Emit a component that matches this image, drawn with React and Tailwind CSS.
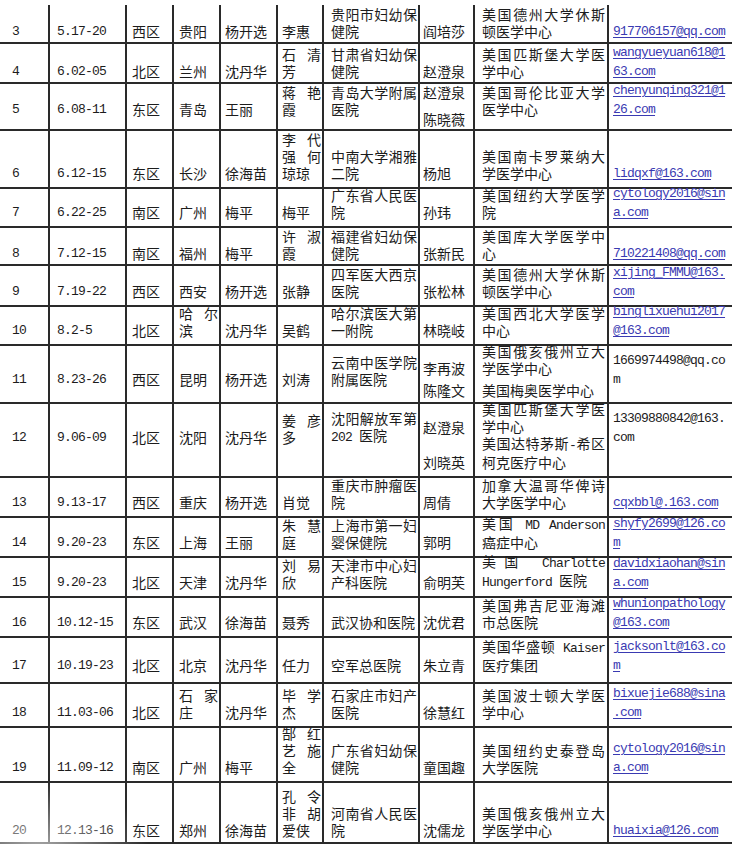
import React from 'react';

// column widths include the 2px right rule; padding follows the scan
const cols = [
  'w-[50px] pl-[12px] border-r-2',
  'w-[77px] pl-[7px] border-r-2',
  'w-[47px] pl-[5px] pr-[2px] border-r-2',
  'w-[47px] pl-[5px] pr-[1px] border-r-2',
  'w-[57px] pl-[4px] border-r-2',
  'w-[46px] pl-[4px] pr-[1px] border-r-2',
  'w-[96px] pl-[7px] pr-[1px] border-r-2',
  'w-[55px] pl-[3px] border-r-2',
  'w-[134px] pl-[7px] pr-[2px] border-r-2',
  'flex-1 pl-[4px]',
];

const rows = [
  { h: 'h-[39px]', pb: 'pb-[2px]', c: ['3', '5.17-20', '西区', '贵阳', '杨开选', '李惠', ['贵阳市妇幼保', '健院'], '阎培莎', ['美国德州大学休斯', '顿医学中心'], ['917706157@qq.com']] },
  { h: 'h-[40px]', pb: 'pb-[2px]', c: ['4', '6.02-05', '北区', '兰州', '沈丹华', ['石清', '芳'], ['甘肃省妇幼保', '健院'], '赵澄泉', ['美国匹斯堡大学医', '学中心'], ['wangyueyuan618@1', '63.com']] },
  { h: 'h-[47px]', pb: 'pb-[11px]', c: ['5', '6.08-11', '东区', '青岛', '王丽', ['蒋艳', '霞'], ['青岛大学附属', '医院'], { p: [['赵澄泉'], ['陈晓薇']], gap: 'mt-[10px]', pb: 'pb-[1px]' }, ['美国哥伦比亚大学', '医学中心'], ['chenyunqing321@1', '26.com']] },
  { h: 'h-[58px]', pb: 'pb-[5px]', c: ['6', '6.12-15', '东区', '长沙', '徐海苗', ['李代', '强何', '琼琼'], ['中南大学湘雅', '二院'], '杨旭', ['美国南卡罗莱纳大', '学医学中心'], ['lidqxf@163.com']] },
  { h: 'h-[39px]', pb: 'pb-[5px]', c: ['7', '6.22-25', '南区', '广州', '梅平', '梅平', ['广东省人民医', '院'], '孙玮', ['美国纽约大学医学', '院'], ['cytology2016@sin', 'a.com']] },
  { h: 'h-[38px]', pb: 'pb-[2px]', c: ['8', '7.12-15', '南区', '福州', '梅平', ['许淑', '霞'], ['福建省妇幼保', '健院'], '张新民', ['美国库大学医学中', '心'], ['710221408@qq.com']] },
  { h: 'h-[41px]', pb: 'pb-[5px]', c: ['9', '7.19-22', '西区', '西安', '杨开选', '张静', ['四军医大西京', '医院'], '张松林', ['美国德州大学休斯', '顿医学中心'], ['xijing_FMMU@163.', 'com']] },
  { h: 'h-[39px]', pb: 'pb-[5px]', c: ['10', '8.2-5', '北区', ['哈尔', '滨'], '沈丹华', '吴鹤', ['哈尔滨医大第', '一附院'], '林晓岐', ['美国西北大学医学', '中心'], ['binglixuehui2017', '@163.com']] },
  { h: 'h-[58px]', pb: 'pb-[14px]', plain: true, c: ['11', '8.23-26', '西区', '昆明', '杨开选', '刘涛', ['云南中医学院', '附属医院'], { p: [['李再波'], ['陈隆文']], gap: 'mt-[5px]', pb: 'pb-[3px]' }, { p: [['美国俄亥俄州立大', '学医学中心'], ['美国梅奥医学中心']], gap: 'mt-[5px]', pb: 'pb-[3px]' }, ['1669974498@qq.co', 'm']] },
  { h: 'h-[74px]', pb: 'pb-[30px]', plain: true, c: ['12', '9.06-09', '北区', '沈阳', '沈丹华', ['姜彦', '多'], ['沈阳解放军第', '202 医院'], { p: [['赵澄泉'], ['刘晓英']], gap: 'mt-[18px]', pb: 'pb-[5px]' }, { p: [['美国匹斯堡大学医', '学中心'], ['美国达特茅斯-希区', '柯克医疗中心']], pb: 'pb-[5px]' }, ['13309880842@163.', 'com']] },
  { h: 'h-[40px]', pb: 'pb-[5px]', c: ['13', '9.13-17', '西区', '重庆', '杨开选', '肖觉', ['重庆市肿瘤医', '院'], '周倩', ['加拿大温哥华俾诗', '大学医学中心'], ['cqxbbl@.163.com']] },
  { h: 'h-[40px]', pb: 'pb-[5px]', c: ['14', '9.20-23', '东区', '上海', '王丽', ['朱慧', '庭'], ['上海市第一妇', '婴保健院'], '郭明', ['美国 MD Anderson', '癌症中心'], ['shyfy2699@126.co', 'm']] },
  { h: 'h-[40px]', pb: 'pb-[5px]', c: ['15', '9.20-23', '北区', '天津', '沈丹华', ['刘易', '欣'], ['天津市中心妇', '产科医院'], '俞明芙', ['美国 Charlotte', 'Hungerford 医院'], ['davidxiaohan@sin', 'a.com']] },
  { h: 'h-[40px]', pb: 'pb-[5px]', c: ['16', '10.12-15', '东区', '武汉', '徐海苗', '聂秀', '武汉协和医院', '沈优君', ['美国弗吉尼亚海滩', '市总医院'], ['whunionpathology', '@163.com']] },
  { h: 'h-[46px]', pb: 'pb-[8px]', c: ['17', '10.19-23', '北区', '北京', '沈丹华', '任力', '空军总医院', '朱立青', ['美国华盛顿 Kaiser', '医疗集团'], ['jacksonlt@163.co', 'm']] },
  { h: 'h-[44px]', pb: 'pb-[5px]', c: ['18', '11.03-06', '北区', ['石家', '庄'], '沈丹华', ['毕学', '杰'], ['石家庄市妇产', '医院'], '徐慧红', ['美国波士顿大学医', '学中心'], ['bixuejie688@sina', '.com']] },
  { h: 'h-[55px]', pb: 'pb-[5px]', c: ['19', '11.09-12', '南区', '广州', '梅平', ['郜红', '艺施', '全'], ['广东省妇幼保', '健院'], '童国趣', ['美国纽约史泰登岛', '大学医院'], ['cytology2016@sin', 'a.com']] },
  { h: 'h-[61px]', pb: 'pb-[3px]', c: ['20', '12.13-16', '东区', '郑州', '徐海苗', ['孔令', '非胡', '爱侠'], ['河南省人民医', '院'], '沈儒龙', ['美国俄亥俄州立大', '学医学中心'], ['huaixia@126.com']] },
];

function Runs({ s }) {
  // latin runs get the narrow mono face of the scan
  const parts = s.split(/([\x20-\x7E]+)/).filter(Boolean);
  return parts.map((p, i) =>
    /[\x20-\x7E]/.test(p[0]) ? (
      <span key={i} className="font-['Liberation_Mono',monospace] text-[13px] tracking-[-0.8px]">{p}</span>
    ) : (
      <React.Fragment key={i}>{p}</React.Fragment>
    )
  );
}

function Cell({ v, col, pb, mail, plain }) {
  const cell = typeof v === 'string' ? { p: [[v]] } : Array.isArray(v) ? { p: [v] } : v;
  const bottom = cell.pb || pb;
  return (
    <div className={`${cols[col]} ${bottom} min-w-0 flex flex-col justify-end border-[#2a2a2a]`}>
      {cell.p.map((lines, pi) => (
        <div key={pi} className={pi > 0 ? cell.gap : ''}>
          {lines.map((line, li) => {
            const justify = !mail && li < lines.length - 1;
            if (mail) {
              return (
                <div key={li} className="whitespace-nowrap">
                  <span
                    className={`font-['Liberation_Mono',monospace] text-[13px] tracking-[-0.8px] ${
                      plain ? 'text-[#1c1c1c]' : 'text-[#3a3ab2] underline decoration-1 underline-offset-2'
                    }`}
                  >
                    {line}
                  </span>
                </div>
              );
            }
            return (
              <div key={li} className={justify ? 'whitespace-nowrap text-justify [text-align-last:justify]' : 'whitespace-nowrap'}>
                <Runs s={line} />
              </div>
            );
          })}
        </div>
      ))}
    </div>
  );
}

export default function App() {
  return (
    <div className="relative w-[732px] h-[850px] overflow-hidden bg-white pt-[5px] font-['Noto_Sans_CJK_SC',sans-serif] text-[14px] leading-[17px] text-[#1c1c1c]">
      {rows.map((r, ri) => (
        <div key={ri} className={`${r.h} flex border-b-2 border-[#2a2a2a]`}>
          {r.c.map((v, ci) => (
            <Cell key={ci} v={v} col={ci} pb={r.pb} mail={ci === 9} plain={r.plain} />
          ))}
        </div>
      ))}
      {/* faint watermark over the bottom-left corner */}
      <div className="pointer-events-none absolute left-0 bottom-0 w-[150px] h-[70px] bg-[radial-gradient(ellipse_at_25%_100%,rgba(255,255,255,0.6),rgba(255,255,255,0)_70%)]" />
    </div>
  );
}
